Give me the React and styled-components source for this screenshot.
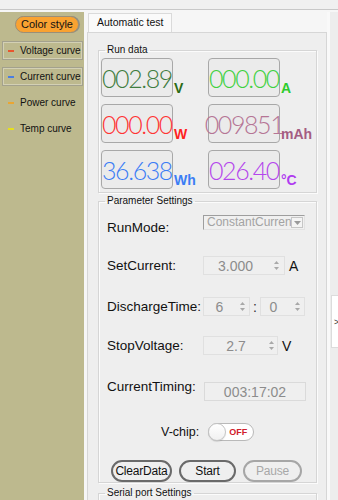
import React from "react";
import styled, { createGlobalStyle } from "styled-components";

const Global = createGlobalStyle`
  html, body { margin: 0; padding: 0; }
  body {
    width: 338px; height: 500px; overflow: hidden;
    background: #f0f0f0;
    font-family: "Liberation Sans", Arial, sans-serif;
    color: #111;
  }
  * { box-sizing: border-box; }
`;

const Screen = styled.div`
  width: 338px; height: 500px;
  display: flex; flex-direction: column;
  background: #f0f0f0; overflow: hidden;
`;
const TopBar = styled.div`
  flex: none; height: 10px;
  background: #f0f0f0;
  border-bottom: 1px solid #c8c8c8;
`;
const Body = styled.div`
  flex: 1; display: flex; min-height: 0;
  padding-top: 2px; background: #f6f6f6;
`;

const Sidebar = styled.aside`
  flex: none; width: 84px; margin-right: 3px;
  background: #bdb98e;
  display: flex; flex-direction: column;
  padding: 4px 0 0 2px;
`;
const ColorStyle = styled.button`
  align-self: flex-start; margin-left: 13px;
  height: 17px; padding: 0 5px;
  border-radius: 9px; border: 1px solid #9a8f78;
  box-shadow: 1px 0 0 #8f8f86;
  background: #f9a231;
  font: 11px "Liberation Sans", Arial, sans-serif; color: #111;
  line-height: 15px;
`;
const CurveList = styled.ul`
  list-style: none; margin: 8px 0 0; padding: 0;
  display: flex; flex-direction: column; gap: 7px;
`;
const CurveItem = styled.li`
  width: 81px; height: 19px;
  display: flex; align-items: center;
  padding-left: 5px;
  border: 1px solid ${(p) => (p.$boxed ? "#a3a18d" : "transparent")};
  box-shadow: ${(p) => (p.$boxed ? "inset 0 0 0 1px #d3d0b4" : "none")};
  font-size: 10px; color: #111; white-space: nowrap;
`;
const Dash = styled.span`
  width: 6px; height: 2px; margin-right: 6px;
  background: ${(p) => p.$color};
`;

const Main = styled.main`
  flex: none; width: 240px;
  display: flex; flex-direction: column;
`;
const TabRow = styled.div`
  flex: none; height: 20px; padding: 1px 0 0 1px; display: flex;
`;
const Tab = styled.div`
  width: 84px; height: 19px;
  background: #fafafa;
  border: 1px solid #dadada; border-bottom: none;
  font-size: 10.5px; line-height: 17px; padding-left: 8px;
  white-space: nowrap;
`;
const Panel = styled.section`
  flex: 1; background: #eeeeee;
  border: 1px solid #d6d6d6; border-bottom: none;
  padding: 10px 9px 0 10px;
  display: flex; flex-direction: column;
`;
const Group = styled.fieldset`
  margin: ${(p) => p.$mt || 0}px 0 0;
  padding: 0 0 ${(p) => p.$pb || 0}px ${(p) => p.$pl || 2}px;
  border: 1px solid #d5d5d5;
  box-shadow: 1px 1px 0 #fbfbfb, inset 1px 1px 0 #fbfbfb;
  min-width: 0;
`;
const Legend = styled.legend`
  margin-left: ${(p) => p.$ml || 4}px; padding: 0 2px;
  font-size: 10px; line-height: 14px; color: #111;
  white-space: nowrap;
`;

const LcdGrid = styled.div`
  display: grid;
  grid-template-columns: 107px 107px;
  row-gap: 7px;
  padding-top: 1px;
`;
const LcdCell = styled.div`
  display: flex; align-items: stretch;
`;
const LcdBox = styled.div`
  width: 72px; height: 39px;
  border: 1.5px solid #a8a8a8; border-radius: 4px;
  background: #ebebeb;
  display: flex; align-items: center; justify-content: center;
  font-family: Lato, "Open Sans", sans-serif; font-weight: 300;
  font-size: 25px; letter-spacing: -1.4px;
  color: ${(p) => p.$color};
`;
const LcdUnit = styled.span`
  align-self: flex-end; margin: 0 0 2px 1px;
  font: bold 14px/14px "Liberation Sans", Arial, sans-serif;
  color: ${(p) => p.$color};
`;

const ParamGrid = styled.div`
  display: grid;
  grid-template-columns: 96px 1fr;
  grid-template-rows: 38px 39px 43px 35px 46px;
  align-items: center;
`;
const Label = styled.span`
  font-size: 13.5px; color: #111; white-space: nowrap;
`;
const Control = styled.div`
  display: flex; align-items: center; gap: ${(p) => p.$gap || 4}px;
  margin: ${(p) => p.$shift || 0}px 0 0 0;
`;
const Select = styled.div`
  width: 102px; height: 15px;
  margin-bottom: 9px;
  border: 1px solid; border-color: #9e9e9e #e2e2e2 #e2e2e2 #9e9e9e;
  background: #f0f0f0;
  display: flex; align-items: center;
`;
const SelectText = styled.span`
  flex: 1; overflow: hidden; white-space: nowrap;
  font-size: 12px; color: #a3a3a3; padding-left: 3px; line-height: 13px;
`;
const SelectArrow = styled.span`
  flex: none; width: 12px; height: 11px; margin-right: 1px;
  border: 1px solid #c6c6c6; background: #f4f4f4;
  display: flex; align-items: center; justify-content: center;
`;
const Spin = styled.div`
  width: ${(p) => p.$w}px; height: 19px;
  border: 1px solid #e0e0e0; background: #efefef;
  display: flex; align-items: center;
  padding-right: ${(p) => p.$pr || 2}px;
`;
const SpinValue = styled.span`
  flex: 1; text-align: center;
  font-size: 14px; color: #8c8c8c;
  padding-right: ${(p) => p.$shift || 0}px;
`;
const Unit = styled.span`
  font-size: 14px; color: #111;
`;
const Colon = styled.span`
  font-size: 14px; color: #333; width: 6px; text-align: center;
`;
const Readout = styled.div`
  width: 102px; height: 19px; margin-left: 1px;
  border: 1px solid #dadada; background: #efefef;
  display: flex; align-items: center; justify-content: center;
  font-size: 14px; color: #8c8c8c;
`;

const ChipRow = styled.div`
  height: 45px; display: flex; align-items: center;
  padding-left: 54px; gap: 9px;
`;
const ChipLabel = styled.span`
  font-size: 12.5px; color: #111;
`;
const Toggle = styled.div`
  width: 46px; height: 18px; border-radius: 9px;
  border: 1px solid #b9b9b9; background: #fff;
  display: flex; align-items: center;
`;
const Knob = styled.span`
  width: 18px; height: 18px; margin-left: -1px; border-radius: 50%;
  border: 1px solid #c4c4c4; background: linear-gradient(#ffffff, #f1f1f1);
  box-shadow: 0 1px 1px rgba(0,0,0,0.12);
`;
const ToggleText = styled.span`
  margin-left: auto; margin-right: 6px;
  font: bold 9px "Liberation Sans", Arial, sans-serif; color: #d0202c;
`;

const ButtonRow = styled.div`
  margin-top: 6px; height: 22px;
  display: flex; gap: 7px; padding-left: 4px;
`;
const Btn = styled.button`
  width: ${(p) => p.$w}px; height: 22px; padding: 0;
  border: 2px solid ${(p) => (p.$disabled ? "#a6a6a6" : "#6a6a6a")};
  border-radius: 11px; background: #efefef;
  font: 12px "Liberation Sans", Arial, sans-serif;
  letter-spacing: -0.2px;
  color: ${(p) => (p.$disabled ? "#a8a8a8" : "#111")};
`;

const Rail = styled.div`
  flex: none; width: 11px;
  border-left: 3px solid #f9f9f9; background: #ededed;
  display: flex; flex-direction: column;
`;
const SideTab = styled.div`
  margin: 283px 0 0 1px; width: 7px; height: 53px;
  background: #fff; border: 1px solid #dcdcdc; border-right: none;
  display: flex; align-items: center; padding-left: 2px;
  font-size: 9px; color: #333; overflow: hidden;
`;

const SpinArrows = () => (
  <svg width="7" height="13" viewBox="0 0 7 13">
    <path d="M1 5 L3.5 2 L6 5 Z" fill="#a8a8a8" />
    <path d="M1 8 L3.5 11 L6 8 Z" fill="#a8a8a8" />
  </svg>
);
const DownTri = () => (
  <svg width="7" height="4" viewBox="0 0 7 4">
    <path d="M0 0 L7 0 L3.5 4 Z" fill="#9a9a9a" />
  </svg>
);

const readings = [
  { value: "002.89", unit: "V", color: "#3f7d3f", unitColor: "#2b6a14" },
  { value: "000.00", unit: "A", color: "#3fd13f", unitColor: "#2ccc2c" },
  { value: "000.00", unit: "W", color: "#ff3333", unitColor: "#ff1f1f" },
  { value: "009851", unit: "mAh", color: "#b57595", unitColor: "#a45c82" },
  { value: "36.638", unit: "Wh", color: "#3b7df5", unitColor: "#3b7df5" },
  { value: "026.40", unit: "°C", color: "#b446ec", unitColor: "#b03cf0" },
];

const curves = [
  { name: "Voltage curve", color: "#e8552e", boxed: true },
  { name: "Current curve", color: "#4a7ee2", boxed: true },
  { name: "Power curve", color: "#eaa633", boxed: false },
  { name: "Temp curve", color: "#e6df1e", boxed: false },
];

export default function App() {
  return (
    <Screen>
      <Global />
      <TopBar />
      <Body>
        <Sidebar>
          <ColorStyle>Color style</ColorStyle>
          <CurveList>
            {curves.map((c) => (
              <CurveItem key={c.name} $boxed={c.boxed}>
                <Dash $color={c.color} />
                {c.name}
              </CurveItem>
            ))}
          </CurveList>
        </Sidebar>
        <Main>
          <TabRow>
            <Tab>Automatic test</Tab>
          </TabRow>
          <Panel>
            <Group $pb={3} $pl={2}>
              <Legend $ml={4}>Run data</Legend>
              <LcdGrid>
                {readings.map((r, i) => (
                  <LcdCell key={i}>
                    <LcdBox $color={r.color}>{r.value}</LcdBox>
                    <LcdUnit $color={r.unitColor}>{r.unit}</LcdUnit>
                  </LcdCell>
                ))}
              </LcdGrid>
            </Group>
            <Group $mt={1} $pl={8} $pb={0}>
              <Legend $ml={-2}>Parameter Settings</Legend>
              <ParamGrid>
                <Label>RunMode:</Label>
                <Control>
                  <Select>
                    <SelectText>ConstantCurrent</SelectText>
                    <SelectArrow><DownTri /></SelectArrow>
                  </Select>
                </Control>

                <Label>SetCurrent:</Label>
                <Control>
                  <Spin $w={82} $pr={4}>
                    <SpinValue $shift={6}>3.000</SpinValue>
                    <SpinArrows />
                  </Spin>
                  <Unit>A</Unit>
                </Control>

                <Label>DischargeTime:</Label>
                <Control $gap={2}>
                  <Spin $w={47} $pr={3}>
                    <SpinValue $shift={4}>6</SpinValue>
                    <SpinArrows />
                  </Spin>
                  <Colon>:</Colon>
                  <Spin $w={45} $pr={3}>
                    <SpinValue $shift={8}>0</SpinValue>
                    <SpinArrows />
                  </Spin>
                </Control>

                <Label>StopVoltage:</Label>
                <Control>
                  <Spin $w={75} $pr={2}>
                    <SpinValue $shift={0}>2.7</SpinValue>
                    <SpinArrows />
                  </Spin>
                  <Unit>V</Unit>
                </Control>

                <Label>CurrentTiming:</Label>
                <Control $shift={11}>
                  <Readout>003:17:02</Readout>
                </Control>
              </ParamGrid>
              <ChipRow>
                <ChipLabel>V-chip:</ChipLabel>
                <Toggle>
                  <Knob />
                  <ToggleText>OFF</ToggleText>
                </Toggle>
              </ChipRow>
              <ButtonRow>
                <Btn $w={61}>ClearData</Btn>
                <Btn $w={57}>Start</Btn>
                <Btn $w={59} $disabled>Pause</Btn>
              </ButtonRow>
            </Group>
            <Group $mt={3} $pl={8}>
              <Legend $ml={-2}>Serial port Settings</Legend>
            </Group>
          </Panel>
        </Main>
        <Rail>
          <SideTab>&gt;</SideTab>
        </Rail>
      </Body>
    </Screen>
  );
}
